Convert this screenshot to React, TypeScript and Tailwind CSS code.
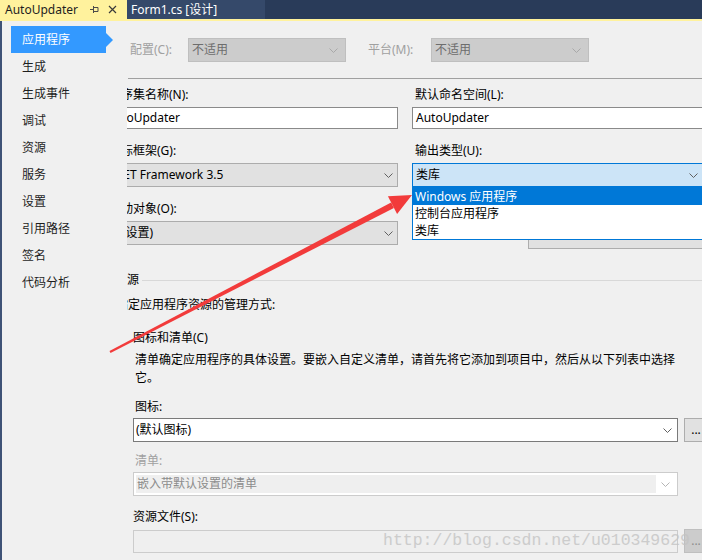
const sidebarItems = ["应用程序", "生成", "生成事件", "调试", "资源", "服务", "设置", "引用路径", "签名", "代码分析"];

function Chevron({ color = "#606060" }: { color?: string }) {
  return (
    <svg width="9" height="5" viewBox="0 0 9 5" className="shrink-0">
      <path d="M0.5 0.5 L4.5 4.5 L8.5 0.5" fill="none" stroke={color} strokeWidth="1" />
    </svg>
  );
}

function Label({ children, className = "" }: { children: React.ReactNode; className?: string }) {
  return <div className={`h-[16px] leading-[16px] whitespace-nowrap ${className}`}>{children}</div>;
}

export default function App() {
  return (
    <div className="w-[702px] h-[560px] overflow-hidden relative bg-[#F0F0F0] text-[12px] text-black font-['Noto_Sans','Noto_Sans_CJK_SC',sans-serif]">
      {/* tab strip */}
      <div className="flex h-[19px] bg-[#293B59]">
        <div className="w-[127px] bg-[#FFF29D] flex items-center pl-[5px] text-[#1E1E1E]">
          <span className="leading-[19px]">AutoUpdater</span>
          <svg width="9" height="9" viewBox="0 0 9 9" className="ml-[12px]">
            <path d="M0 4.5 H3 M3.5 1 V8 M3.5 2.5 H8 V6.5 H3.5" fill="none" stroke="#4A4A4A" strokeWidth="1" />
          </svg>
          <svg width="9" height="9" viewBox="0 0 9 9" className="ml-[9px]">
            <path d="M1 1 L8 8 M8 1 L1 8" fill="none" stroke="#3A3A3A" strokeWidth="1.2" />
          </svg>
        </div>
        <div className="w-[138px] bg-[#35496A] text-white pl-[4px] flex items-center leading-[19px]">Form1.cs [设计]</div>
      </div>
      <div className="h-[2px] bg-[#FFF29D]" />

      <div className="flex h-[539px]">
        {/* sidebar */}
        <div className="w-[127px] shrink-0 border-l-2 border-[#3E5276] pt-[5px]">
          {sidebarItems.map((item, i) =>
            i === 0 ? (
              <div key={item} className="relative ml-[9px] w-[95px] h-[27px] bg-[#3399FF] text-white pl-[11px] leading-[27px]">
                {item}
                <div className="absolute right-[-7px] top-[7px] w-0 h-0 border-y-[7px] border-y-transparent border-l-[7px] border-l-[#3399FF]" />
              </div>
            ) : (
              <div key={item} className="h-[27px] leading-[27px] pl-[20px] text-[#1E1E1E]">
                {item}
              </div>
            )
          )}
        </div>

        {/* content, scrolled a bit to the right */}
        <div className="flex-1 overflow-hidden">
          <div className="ml-[-21px] w-[640px]">
            {/* config row */}
            <div className="mt-[17px] h-[24px] flex items-center pl-[24px]">
              <div className="w-[58px] text-[#A0A0A0]">配置(C):</div>
              <div className="w-[158px] h-[24px] bg-[#CCCCCC] border border-[#BFBFBF] flex items-center justify-between pl-[3px] pr-[7px] text-[#6D6D6D]">
                不适用
                <Chevron color="#A8A8A8" />
              </div>
              <div className="ml-[22px] w-[63px] text-[#A0A0A0]">平台(M):</div>
              <div className="w-[158px] h-[24px] bg-[#CCCCCC] border border-[#BFBFBF] flex items-center justify-between pl-[3px] pr-[7px] text-[#6D6D6D]">
                不适用
                <Chevron color="#A8A8A8" />
              </div>
            </div>

            <div className="mt-[16px] ml-[22px] h-px bg-[#A0A0A0]" />

            {/* two columns */}
            <div className="mt-[8px] flex gap-[14px]">
              <div className="w-[292px]">
                <Label className="pl-[3px]">程序集名称(N):</Label>
                <div className="mt-[4px] h-[22px] bg-white border border-[#8A8A8A] pl-0 leading-[20px]">AutoUpdater</div>

                <Label className="mt-[14px] pl-[3px]">目标框架(G):</Label>
                <div className="mt-[4px] h-[24px] bg-[#E1E1E1] border border-[#ACACAC] flex items-center justify-between pl-[4px] pr-[4px]">
                  .NET Framework 3.5
                  <Chevron />
                </div>

                <Label className="mt-[14px] pl-[3px]">启动对象(O):</Label>
                <div className="mt-[4px] h-[24px] bg-[#E1E1E1] border border-[#ACACAC] flex items-center justify-between pl-[3px] pr-[4px]">
                  (未设置)
                  <Chevron />
                </div>
              </div>

              <div className="w-[300px]">
                <Label className="pl-[3px]">默认命名空间(L):</Label>
                <div className="mt-[4px] h-[22px] bg-white border border-[#8A8A8A] pl-[3px] leading-[20px]">AutoUpdater</div>

                <Label className="mt-[14px] pl-[3px]">输出类型(U):</Label>
                <div className="relative mt-[4px]">
                  <div className="h-[24px] w-[292px] bg-[#CCE4F7] border border-[#0078D7] flex items-center justify-between pl-[3px] pr-[5px]">
                    类库
                    <Chevron />
                  </div>
                  <div className="absolute left-0 top-full w-[300px] bg-white border border-[#0078D7] z-10">
                    <div className="h-[17px] leading-[17px] pl-[2px] bg-[#0078D7] text-white">Windows 应用程序</div>
                    <div className="h-[17px] leading-[17px] pl-[2px]">控制台应用程序</div>
                    <div className="h-[17px] leading-[17px] pl-[2px]">类库</div>
                  </div>
                </div>

                <div className="mt-[36px] ml-[116px] h-[26px] w-[200px] bg-[#E1E1E1] border border-[#ADADAD] flex items-start justify-center pt-[2px] leading-[16px]">
                  程序集信息(I)...
                </div>
              </div>
            </div>

            {/* resources */}
            <div className="mt-[23px] h-[16px] flex items-center pl-[9px]">
              <span className="leading-[16px]">资源</span>
              <div className="ml-[3px] flex-1 h-px bg-[#D8D8D8]" />
            </div>
            <Label className="mt-[9px] pl-[10px]">指定应用程序资源的管理方式:</Label>
            <Label className="mt-[17px] pl-[27px]">图标和清单(C)</Label>
            <div className="mt-[5px] pl-[29px] leading-[18px] whitespace-nowrap">
              <div>清单确定应用程序的具体设置。要嵌入自定义清单，请首先将它添加到项目中，然后从以下列表中选择</div>
              <div>它。</div>
            </div>

            <Label className="mt-[12px] pl-[29px]">图标:</Label>
            <div className="mt-[3px] pl-[27px] flex gap-[6px]">
              <div className="w-[545px] h-[24px] bg-white border border-[#7A7A7A] flex items-center justify-between pl-[2px] pr-[5px]">
                (默认图标)
                <Chevron />
              </div>
              <div className="w-[24px] h-[24px] bg-[#E1E1E1] border border-[#ADADAD] flex items-center justify-center leading-none">...</div>
            </div>

            <Label className="mt-[11px] pl-[29px] text-[#A0A0A0]">清单:</Label>
            <div className="mt-[3px] ml-[27px] w-[545px] h-[24px] bg-white border border-[#CCCCCC] flex p-[2px]">
              <div className="flex-1 bg-[#EFEFEF] text-[#8C8C8C] leading-[18px] pl-[1px]">嵌入带默认设置的清单</div>
              <div className="w-[19px] flex items-center justify-center">
                <Chevron color="#B5B5B5" />
              </div>
            </div>

            <Label className="mt-[13px] pl-[27px]">资源文件(S):</Label>
            <div className="mt-[5px] pl-[27px] flex gap-[6px]">
              <div className="w-[545px] h-[23px] bg-[#EFEFEF] border border-[#CCCCCC]" />
              <div className="w-[24px] h-[24px] mt-[-1px] bg-[#CCCCCC] border border-[#BFBFBF] flex items-center justify-center leading-none text-[#8C8C8C]">...</div>
            </div>
          </div>
        </div>
      </div>

      {/* red annotation arrow */}
      <svg className="absolute inset-0 pointer-events-none" width="702" height="560" viewBox="0 0 702 560">
        <polygon points="110.5,352.9 109.5,351.1 391.1,202.5 393.9,207.9" fill="#F23B3B" />
        <polygon points="412,195 397.1,214.1 387.9,196.3" fill="#F23B3B" />
      </svg>

      {/* watermark */}
      <div className="absolute left-[383px] top-[530px] text-[16.5px] leading-[22px] text-[#C4C4C4] opacity-80 font-['Liberation_Mono',monospace] whitespace-nowrap pointer-events-none">
        http://blog.csdn.net/u010349629
      </div>
    </div>
  );
}
